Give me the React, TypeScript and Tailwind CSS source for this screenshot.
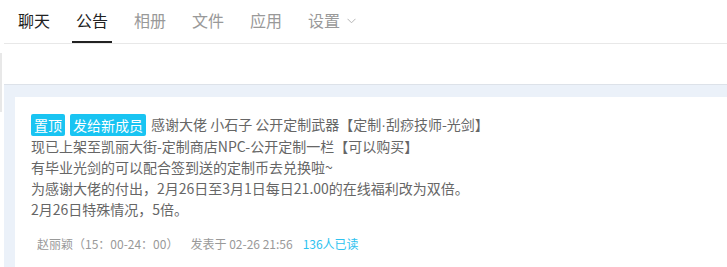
import { useState } from 'react';

const tabs = ['聊天', '公告', '相册', '文件', '应用', '设置'];

const lines = [
  '现已上架至凯丽大街-定制商店NPC-公开定制一栏【可以购买】',
  '有毕业光剑的可以配合签到送的定制币去兑换啦~',
  '为感谢大佬的付出，2月26日至3月1日每日21.00的在线福利改为双倍。',
  '2月26日特殊情况，5倍。',
];

function Chevron() {
  return (
    <svg width="9" height="6" viewBox="0 0 9 6" className="ml-[7px] mt-[1px]">
      <polyline points="0.5,0.8 4.5,4.8 8.5,0.8" fill="none" stroke="#b5b5b5" strokeWidth="1" />
    </svg>
  );
}

export default function App() {
  const [active, setActive] = useState(1);

  return (
    <div
      className="flex w-[727px] h-[267px] overflow-hidden bg-white"
      style={{ fontFamily: '"Noto Sans CJK SC", "Noto Sans", sans-serif' }}
    >
      {/* edge of the neighbouring panel */}
      <div className="w-[4px] shrink-0 pt-[53px]">
        <div className="h-[59px] w-[2px] bg-[#e8e8e8]" />
      </div>

      <div className="flex-1 flex flex-col min-w-0">
        {/* Tabs */}
        <div className="flex h-[44px] shrink-0 border-b border-[#e8e8e8] pl-[10px] gap-[18px]">
          {tabs.map((t, i) => (
            <button
              key={t}
              onClick={() => setActive(i)}
              className={`flex items-start px-[4px] pt-[9px] text-[16px] leading-[22px] border-b-2 ${
                active === i
                  ? 'border-[#222] text-[#222]'
                  : i === 0
                  ? 'border-transparent text-[#222]'
                  : 'border-transparent text-[#999]'
              }`}
            >
              <span className="flex items-center">
                {t}
                {i === tabs.length - 1 && <Chevron />}
              </span>
            </button>
          ))}
        </div>

        <div className="h-[40px] shrink-0" />

        {/* Notice list */}
        <div className="flex-1 border-t border-[#dde2e9] bg-[#ebf1f9] pt-[12px] pl-[11px]">
          <div className="h-full bg-white pl-[16px] pt-[17px] text-[14px] leading-[21px] text-[#666]">
            <div className="flex items-center">
              <span className="rounded-[2px] bg-[#19c4f2] px-[3px] text-white leading-[22px]">置顶</span>
              <span className="ml-[5px] rounded-[2px] bg-[#19c4f2] px-[3px] text-white leading-[22px]">
                发给新成员
              </span>
              <span className="ml-[5px] whitespace-nowrap">
                感谢大佬 小石子 公开定制武器【定制
                <span style={{ fontFamily: '"Liberation Sans", sans-serif' }}>·</span>
                刮痧技师-光剑】
              </span>
            </div>
            {lines.map((l) => (
              <div key={l} className="whitespace-nowrap">
                {l}
              </div>
            ))}
            <div className="mt-[14px] flex pl-[6px] text-[12px] leading-[20px] text-[#999] whitespace-nowrap">
              <span>赵丽颖（15：00-24：00）</span>
              <span className="ml-[12px]">发表于 02-26 21:56</span>
              <span className="ml-[10px] text-[#2ec2ef]">136人已读</span>
            </div>
          </div>
        </div>
      </div>
    </div>
  );
}
